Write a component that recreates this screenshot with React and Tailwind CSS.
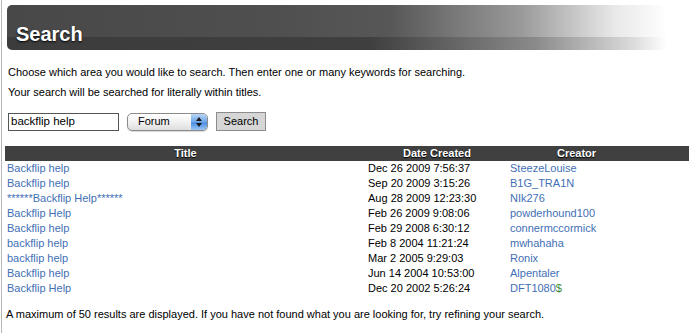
import React from "react";

const rows = [
  ["Backflip help", "Dec 26 2009 7:56:37", "SteezeLouise"],
  ["Backflip help", "Sep 20 2009 3:15:26", "B1G_TRA1N"],
  ["******Backflip Help******", "Aug 28 2009 12:23:30", "NIk276"],
  ["Backflip Help", "Feb 26 2009 9:08:06", "powderhound100"],
  ["Backflip help", "Feb 29 2008 6:30:12", "connermccormick"],
  ["backflip help", "Feb 8 2004 11:21:24", "mwhahaha"],
  ["backflip help", "Mar 2 2005 9:29:03", "Ronix"],
  ["Backflip help", "Jun 14 2004 10:53:00", "Alpentaler"],
  ["Backflip Help", "Dec 20 2002 5:26:24", "DFT1080"],
];

export default function App() {
  return (
    <div
      className="w-[691px] h-[333px] bg-white overflow-hidden"
      style={{ fontFamily: '"Liberation Sans", Arial, sans-serif' }}
    >
      <div className="ml-px h-full border-l border-[#b8b8b8] pl-[5px] pt-[5px] text-black">
        {/* Banner */}
        <div className="w-[660px] h-[45px] rounded-[5px] overflow-hidden flex flex-col">
          <div className="h-[32px] bg-[linear-gradient(90deg,#484848_0%,#4f4f4f_40%,#575757_58%,#9a9a9a_78%,#e8e8e8_92%,#ffffff_100%)]" />
          <div className="h-[13px] bg-[linear-gradient(90deg,#3c3c3c_0%,#3f3f3f_55%,#8a8a8a_80%,#dcdcdc_95%,#ffffff_100%)]" />
        </div>
        <div className="relative -mt-[26px] h-[26px] pl-[9px]">
          <span className="text-[20px] font-bold text-white leading-[20px] [text-shadow:0_1px_2px_#000]">
            Search
          </span>
        </div>

        <p className="mt-[15px] pl-[1px] text-[11px] leading-[14px]">
          Choose which area you would like to search. Then enter one or many keywords for searching.
        </p>
        <p className="mt-[6px] pl-[1px] text-[11px] leading-[14px]">
          Your search will be searched for literally within titles.
        </p>

        {/* Form */}
        <div className="mt-[13px] pl-[1px] flex items-center h-[19px]">
          <div className="w-[111px] h-[18px] border border-[#555] flex items-center px-[2px] text-[11.5px] leading-none">
            backflip help
          </div>
          <div className="ml-[8px] w-[81px] h-[18px] rounded-[5px] border border-[#8a8a8a] bg-[linear-gradient(180deg,#ffffff_0%,#f1f1f1_50%,#dedede_100%)] flex items-center overflow-hidden shadow-[0_1px_1px_rgba(0,0,0,0.15)]">
            <span className="pl-[10px] text-[11px] leading-none flex-1">Forum</span>
            <div className="w-[16px] h-full rounded-r-[4px] bg-[linear-gradient(180deg,#b9d5f5_0%,#6ea7e8_50%,#4a8ce0_55%,#9cc6f4_100%)] flex flex-col items-center justify-center gap-[2px]">
              <svg width="6" height="4" viewBox="0 0 6 4"><path d="M3 0L6 4H0z" fill="#1a1a1a" /></svg>
              <svg width="6" height="4" viewBox="0 0 6 4"><path d="M0 0H6L3 4z" fill="#1a1a1a" /></svg>
            </div>
          </div>
          <div className="ml-[8px] w-[50px] h-[19px] border border-[#8c8c8c] bg-[#d6d6d6] flex items-center justify-center text-[11px] leading-none">
            Search
          </div>
        </div>

        {/* Table */}
        <div className="mt-[15px] -ml-[2px] w-[684px]">
          <div className="grid grid-cols-[361px_142px_137px_44px] h-[15px] bg-[#404040] text-white text-[11px] font-bold leading-[15px] [text-shadow:0_1px_1px_#000]">
            <div className="text-center">Title</div>
            <div className="text-center">Date Created</div>
            <div className="text-center">Creator</div>
            <div />
          </div>
          {rows.map((r, i) => (
            <div
              key={i}
              className="grid grid-cols-[361px_142px_137px_44px] h-[15px] text-[11px] leading-[15px]"
            >
              <div className="pl-[2px] text-[#3f6fb5]">{r[0]}</div>
              <div className="pl-[2px]">{r[1]}</div>
              <div className="pl-[2px] text-[#3f6fb5]">
                {r[2]}
                {i === 8 && <span className="text-[#3c8c3c]">$</span>}
              </div>
              <div />
            </div>
          ))}
        </div>

        <p className="mt-[11px] -ml-[1px] text-[11px] leading-[14px]">
          A maximum of 50 results are displayed. If you have not found what you are looking for, try refining your search.
        </p>
      </div>
    </div>
  );
}
